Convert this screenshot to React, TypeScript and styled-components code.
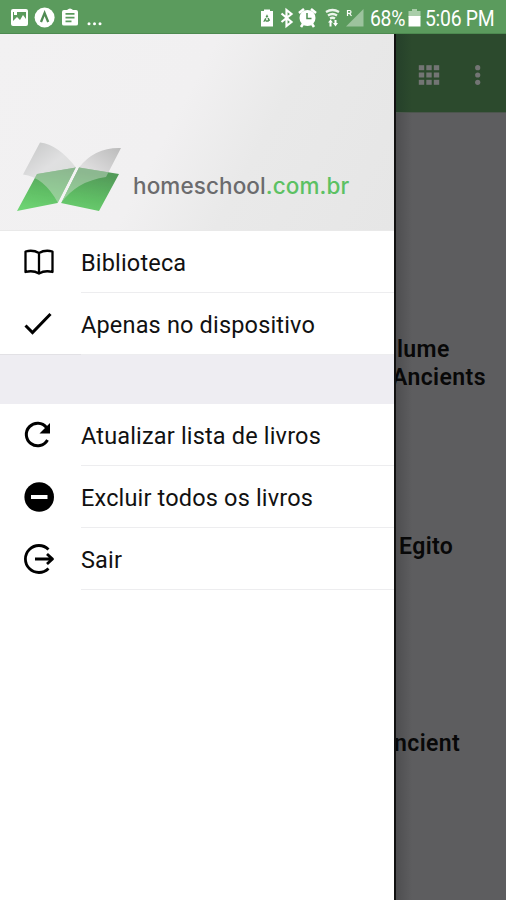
import React from 'react';
import styled, { createGlobalStyle } from 'styled-components';

const GlobalStyle = createGlobalStyle`
  * { box-sizing: border-box; }
  body { margin: 0; background: #5d5d5f; }
`;

const Screen = styled.div`
  width: 506px;
  height: 900px;
  display: flex;
  flex-direction: column;
  overflow: hidden;
  font-family: Roboto, sans-serif;
`;

const StatusBar = styled.header`
  height: 34px;
  flex: none;
  display: flex;
  align-items: center;
  justify-content: space-between;
  background: #5b9b5d;
  border-bottom: 1px solid #4d8a50;
  color: #fff;
`;

const StatusGroup = styled.div`
  display: flex;
  height: 34px;
  svg { display: block; flex: none; }
`;

const StatusText = styled.span<{ $width: number }>`
  width: ${p => p.$width}px;
  font-size: 21.5px;
  line-height: 38px;
  white-space: nowrap;
  letter-spacing: -0.3px;
  transform: scaleX(0.9);
  transform-origin: left;
`;

const Body = styled.div`
  display: flex;
  flex: 1;
  min-height: 0;
`;

const Drawer = styled.nav`
  width: 394px;
  flex: none;
  background: #fff;
`;

const Brand = styled.div`
  height: 197px;
  display: flex;
  align-items: flex-start;
  padding: 106px 0 0 14px;
  border-bottom: 1px solid #e9e9e9;
  background: linear-gradient(118deg, #f2f1f2 0%, #f1f0f1 44%, #e9e9e9 64%, #e6e6e6 100%);
  svg { display: block; flex: none; }
`;

const BrandName = styled.div`
  padding: 32px 0 0 8px;
  font: 500 22.5px/28px Inter, sans-serif;
  letter-spacing: 0.1px;
  white-space: nowrap;
  color: #6b6b6d;
  span { color: #5cc163; }
`;

const MenuItem = styled.a`
  height: 61.8px;
  display: flex;
  padding-left: 22px;
  color: #000;
  svg { display: block; flex: none; margin-top: 14px; }
`;

const MenuLabel = styled.span<{ $spacing: number }>`
  flex: 1;
  margin-left: 25px;
  padding-top: 1px;
  border-bottom: 1px solid #ededef;
  font-size: 23.5px;
  line-height: 63px;
  letter-spacing: ${p => p.$spacing}px;
  white-space: nowrap;
  color: #111;
`;

const SectionGap = styled.div`
  height: 50.6px;
  margin-top: -0.8px;
  background: #eeedf2;
  border-top: 1px solid #e2e1e5;
`;

const Page = styled.main`
  flex: 1;
  min-width: 0;
  overflow: hidden;
  border-left: 2px solid #111;
  background: linear-gradient(90deg, #4e4e50 0, #5d5d5f 16px);
`;

const AppBar = styled.div`
  height: 79px;
  display: flex;
  border-bottom: 1px solid #4c554d;
  background: linear-gradient(90deg, #25402a 0, #2c4a2d 16px);
  svg { display: block; }
`;

const BookTitle = styled.h2<{ $top: number; $shift: number }>`
  margin: ${p => p.$top}px 0 0 ${p => p.$shift}px;
  font-size: 23px;
  font-weight: 600;
  line-height: 28px;
  letter-spacing: 0.4px;
  white-space: nowrap;
  color: #080808;
`;

const NotificationIcons = () => (
  <svg width="110" height="34" viewBox="0 0 110 34" fill="#fff">
    <path fillRule="evenodd" d="M13 9h13q2 0 2 2v13q0 2-2 2H13q-2 0-2-2V11q0-2 2-2Zm0 3v9l4-4 3 3 3-5 3 4v-7Z" />
    <path d="M14 12h3v3h-3z" />
    <circle cx="44.600" cy="17.500" r="10" />
    <path d="m41 22 3.600-9 3.600 9" fill="none" stroke="#508b53" strokeWidth="2.300" />
    <path fillRule="evenodd" d="M64 10h3q3-3 6 0h3q2 0 2 2v12q0 1.500-2 1.500H64q-2 0-2-1.500V12q0-2 2-2Zm1.500 3v1.800h9V13Zm0 3.800v1.700h9v-1.700Zm0 3.700v1.700h6v-1.700Z" />
    <circle cx="89" cy="23.700" r="1.500" /><circle cx="94.500" cy="23.700" r="1.500" /><circle cx="100" cy="23.700" r="1.500" />
  </svg>
);

const SystemIcons = () => (
  <svg width="110" height="34" viewBox="260 0 110 34" fill="#fff">
    <path d="M264 9.500h6v1.500h3v15.500h-12V11h3z" />
    <path d="m264.500 21 2.500-5 2.500 5z" fill="none" stroke="#4f8f52" strokeWidth="1.600" strokeDasharray="3 1" />
    <path d="m281.500 13.500 10 8.500-5 4V10l5 4-10 8" fill="none" stroke="#fff" strokeWidth="2.200" />
    <circle cx="307.500" cy="18" r="8" />
    <path d="m299 13 5-4M311 9l5 4M303 24l-2 3M312 24l2 3" stroke="#fff" strokeWidth="2.600" />
    <path d="M307 13v5.500h4.500" fill="none" stroke="#4f8f52" strokeWidth="1.500" />
    <path d="M326 12q6.500-4 13 0M328 15.500q4.500-3 9 0M330 18.500q2.500-1.500 5 0" fill="none" stroke="#edf5ed" strokeWidth="2.300" />
    <path d="m328 22.500 2.500-3 2.500 3h-1.500v4h-2v-4ZM333 23h1.500v-3h2v3h1.500l-2.500 3.500z" />
    <path d="M363.500 9v17.500H346z" opacity=".4" />
    <path d="M347.500 16V10.500h2.200q1.300 0 1.300 1.400t-1.300 1.400h-2.200m2 0 2 2.700" fill="none" stroke="#fff" strokeWidth="1.200" />
  </svg>
);

const BatteryIcon = () => (
  <svg width="20" height="34" viewBox="0 0 20 34">
    <path d="M7 9h5v2h3.500v6H3.500v-6H7z" fill="#a9cda9" />
    <path d="M3.500 16h12v10.500h-12z" fill="#fff" />
  </svg>
);

const LogoIcon = () => (
  <svg width="111" height="76" viewBox="14 140 111 76">
    <defs>
      <linearGradient id="leaf" x1="0" y1="1" x2=".4" y2="0">
        <stop offset="0" stopColor="#70d775" /><stop offset=".5" stopColor="#60bd65" /><stop offset="1" stopColor="#549b5a" />
      </linearGradient>
      <linearGradient id="pageLeft" x1="0" y1="0" x2=".65" y2="1">
        <stop offset="0" stopColor="#c4c5c5" /><stop offset=".5" stopColor="#e0e0e1" /><stop offset="1" stopColor="#d8dcd8" />
      </linearGradient>
      <linearGradient id="pageRight" x1="1" y1="0" x2=".2" y2="1">
        <stop offset="0" stopColor="#bbb" /><stop offset=".5" stopColor="#deddde" /><stop offset="1" stopColor="#d5ddd5" />
      </linearGradient>
      <clipPath id="leaves"><path d="M37 174 76 167.500 57.500 203 17 211ZM79 167.500l40 6.500-20 37-38-8Z" /></clipPath>
    </defs>
    <path d="M40 142.500q18 2 36 25L58 203q-14-26-35-28.500Z" fill="url(#pageLeft)" />
    <path d="M121 148q-26-1-42 19.500L61 203q16-22 45-26Z" fill="url(#pageRight)" />
    <path d="M37 174 76 167.500 57.500 203 17 211ZM79 167.500l40 6.500-20 37-38-8Z" fill="url(#leaf)" />
    <g clipPath="url(#leaves)" fill="#dce1dc" opacity=".42">
      <path d="M40 142.500q18 2 36 25L58 203q-14-26-35-28.500Z" />
      <path d="M121 148q-26-1-42 19.500L61 203q16-22 45-26Z" />
    </g>
    <path d="m77.500 167-18.500 37" stroke="#f4f4f4" strokeWidth="2.500" />
  </svg>
);

type IconName = 'book' | 'check' | 'refresh' | 'remove' | 'exit';
const glyphs: Record<IconName, React.ReactNode> = {
  book: <path d="M3.500 6.500Q11 4.500 17 8q6-3.500 13.500-1.500v20.500Q23 25 17 28.500q-6-3.500-13.500-1.500ZM17 8v20" strokeWidth="2.300" />,
  check: <path d="m3.500 18.500 7 7L28.500 7" strokeWidth="3" strokeLinejoin="miter" />,
  refresh: <><path d="M25.500 22A11.300 11.300 0 1 1 24.500 9.500" strokeWidth="3" /><path d="M28 5v10.500H17.500z" fill="currentColor" stroke="none" /></>,
  remove: <><circle cx="17.200" cy="17" r="14.800" fill="currentColor" stroke="none" /><path d="M9 17h16.500" stroke="#fff" strokeWidth="4" /></>,
  exit: <path d="M26.500 7.500A13.500 13.500 0 1 0 26.500 26.500M13 17h17M25 12l5.500 5-5.500 5" strokeWidth="2.800" />,
};

const MenuIcon = ({ name }: { name: IconName }) => (
  <svg width="34" height="34" viewBox="0 0 34 34" fill="none" stroke="currentColor" strokeLinejoin="round">{glyphs[name]}</svg>
);

const Item = ({ icon, label, spacing = 0.17 }: { icon: IconName; label: string; spacing?: number }) => (
  <MenuItem><MenuIcon name={icon} /><MenuLabel $spacing={spacing}>{label}</MenuLabel></MenuItem>
);

export default function App() {
  return (
    <>
      <GlobalStyle />
      <Screen>
        <StatusBar>
          <StatusGroup><NotificationIcons /></StatusGroup>
          <StatusGroup>
            <SystemIcons />
            <StatusText $width={35}>68%</StatusText>
            <BatteryIcon />
            <StatusText $width={81}>5:06 PM</StatusText>
          </StatusGroup>
        </StatusBar>
        <Body>
          <Drawer>
            <Brand>
              <LogoIcon />
              <BrandName>homeschool<span>.com.br</span></BrandName>
            </Brand>
            <Item icon="book" label="Biblioteca" />
            <Item icon="check" label="Apenas no dispositivo" />
            <SectionGap />
            <Item icon="refresh" label="Atualizar lista de livros" />
            <Item icon="remove" label="Excluir todos os livros" />
            <Item icon="exit" label="Sair" />
          </Drawer>
          <Page>
            <AppBar>
              <svg width="110" height="78" viewBox="396 34 110 78" fill="#737574">
                {[421.500, 429, 436.500].flatMap(x => [67.700, 75, 82.300].map(y => (
                  <rect key={`${x}-${y}`} x={x - 2.700} y={y - 2.500} width="5.400" height="5" />
                )))}
                {[67.700, 75, 82.300].map(y => <circle key={y} cx="477.700" cy={y} r="2.600" />)}
              </svg>
            </AppBar>
            <BookTitle $top={223} $shift={1}>lume</BookTitle>
            <BookTitle $top={0} $shift={-4}>Ancients</BookTitle>
            <BookTitle $top={141} $shift={3}>Egito</BookTitle>
            <BookTitle $top={169} $shift={-2}>ncient</BookTitle>
          </Page>
        </Body>
      </Screen>
    </>
  );
}
